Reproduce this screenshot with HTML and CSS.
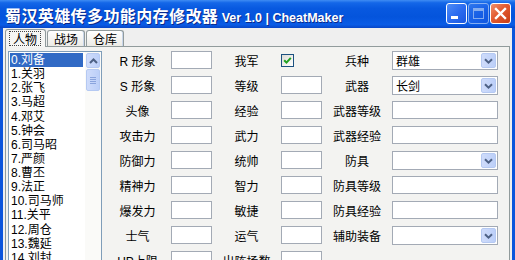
FILE: index.html
```html
<!DOCTYPE html>
<html lang="zh">
<head>
<meta charset="utf-8">
<title>蜀汉英雄传多功能内存修改器</title>
<link rel="stylesheet" href="styles.css">
</head>
<body>
<div class="window">
  <div class="titlebar">
    <div class="title"><span class="t-cn">蜀汉英雄传多功能内存修改器</span><span class="t-en">&nbsp;Ver 1.0 | CheatMaker</span></div>
    <div class="wbtns">
      <div class="wbtn"><svg width="21" height="21" viewBox="0 0 21 21"><rect x="5" y="13" width="7" height="3" fill="#fff"/></svg></div>
      <div class="wbtn dim"><svg width="21" height="21" viewBox="0 0 21 21"><rect x="5.5" y="5.5" width="10" height="10" fill="none" stroke="#fff" stroke-width="1"/><rect x="5" y="5" width="11" height="3" fill="#fff"/></svg></div>
      <div class="wbtn close"><svg width="21" height="21" viewBox="0 0 21 21"><path d="M6 6 L15 15 M15 6 L6 15" stroke="#fff" stroke-width="2.4" stroke-linecap="square"/></svg></div>
    </div>
  </div>
  <div class="client">
    <div class="tabs">
      <div class="tab active"><span class="focus">人物</span></div>
      <div class="tab">战场</div>
      <div class="tab">仓库</div>
    </div>
    <div class="page">
      <div class="listbox">
        <ul class="items">
          <li class="sel">0.刘备</li>
          <li>1.关羽</li>
          <li>2.张飞</li>
          <li>3.马超</li>
          <li>4.邓艾</li>
          <li>5.钟会</li>
          <li>6.司马昭</li>
          <li>7.严颜</li>
          <li>8.曹丕</li>
          <li>9.法正</li>
          <li>10.司马师</li>
          <li>11.关平</li>
          <li>12.周仓</li>
          <li>13.魏延</li>
          <li>14.刘封</li>
        </ul>
        <div class="vscroll">
          <div class="sbtn"><svg width="9" height="6" viewBox="0 0 9 6"><path d="M1 5 L4.5 1.5 L8 5" fill="none" stroke="#4d6185" stroke-width="2"/></svg></div>
          <div class="thumb"><i></i><i></i><i></i><i></i></div>
        </div>
      </div>
      <div class="form">
        <div class="lbl">R 形象</div><div class="edit"></div><div class="lbl">我军</div><div class="chkcell"><div class="chk"><svg width="9" height="9" viewBox="0 0 9 9"><path d="M1.2 4.2 L3.5 6.6 L7.8 1.8" fill="none" stroke="#21a121" stroke-width="2"/></svg></div></div><div class="lbl">兵种</div><div class="combo"><span>群雄</span><div class="dd"><svg width="9" height="6" viewBox="0 0 9 6"><path d="M1 1.2 L4.5 4.6 L8 1.2" fill="none" stroke="#4d6185" stroke-width="2"/></svg></div></div>
        <div class="lbl">S 形象</div><div class="edit"></div><div class="lbl">等级</div><div class="edit"></div><div class="lbl">武器</div><div class="combo"><span>长剑</span><div class="dd"><svg width="9" height="6" viewBox="0 0 9 6"><path d="M1 1.2 L4.5 4.6 L8 1.2" fill="none" stroke="#4d6185" stroke-width="2"/></svg></div></div>
        <div class="lbl">头像</div><div class="edit"></div><div class="lbl">经验</div><div class="edit"></div><div class="lbl">武器等级</div><div class="edit"></div>
        <div class="lbl">攻击力</div><div class="edit"></div><div class="lbl">武力</div><div class="edit"></div><div class="lbl">武器经验</div><div class="edit"></div>
        <div class="lbl">防御力</div><div class="edit"></div><div class="lbl">统帅</div><div class="edit"></div><div class="lbl">防具</div><div class="combo"><span></span><div class="dd"><svg width="9" height="6" viewBox="0 0 9 6"><path d="M1 1.2 L4.5 4.6 L8 1.2" fill="none" stroke="#4d6185" stroke-width="2"/></svg></div></div>
        <div class="lbl">精神力</div><div class="edit"></div><div class="lbl">智力</div><div class="edit"></div><div class="lbl">防具等级</div><div class="edit"></div>
        <div class="lbl">爆发力</div><div class="edit"></div><div class="lbl">敏捷</div><div class="edit"></div><div class="lbl">防具经验</div><div class="edit"></div>
        <div class="lbl">士气</div><div class="edit"></div><div class="lbl">运气</div><div class="edit"></div><div class="lbl">辅助装备</div><div class="combo"><span></span><div class="dd"><svg width="9" height="6" viewBox="0 0 9 6"><path d="M1 1.2 L4.5 4.6 L8 1.2" fill="none" stroke="#4d6185" stroke-width="2"/></svg></div></div>
        <div class="lbl">HP上限</div><div class="edit"></div><div class="lbl">出阵场数</div><div class="edit"></div><div></div><div></div>
      </div>
    </div>
  </div>
</div>
</body>
</html>
```
FILE: styles.css
```css
html, body {
  margin: 0;
  padding: 0;
}
body {
  width: 515px;
  height: 260px;
  overflow: hidden;
  font-family: "Liberation Sans", "Noto Sans CJK SC", sans-serif;
  font-size: 12px;
  color: #000;
}
.window {
  width: 515px;
  height: 300px;
  display: flex;
  flex-direction: column;
  background: #0b55dc;
}
.titlebar {
  height: 28px;
  flex: none;
  display: flex;
  align-items: center;
  justify-content: space-between;
  padding: 1px 4px 0 5px;
  box-sizing: border-box;
  background: linear-gradient(#3f8cf3 0%, #1467e8 10%, #0859e0 30%, #0454dc 60%, #0a5ce6 88%, #0846c6 100%);
  color: #fff;
}
.title {
  display: flex;
  align-items: baseline;
  white-space: nowrap;
  text-shadow: 1px 1px 0 #0b2a8c;
}
.t-cn {
  font-family: "Noto Sans CJK SC", sans-serif;
  font-weight: bold;
  font-size: 16px;
  letter-spacing: 0.4px;
}
.t-en {
  font-family: "Liberation Sans", sans-serif;
  font-weight: bold;
  font-size: 12.5px;
}
.wbtns {
  display: flex;
  gap: 1px;
  margin-top: -2px;
}
.wbtn {
  width: 21px;
  height: 21px;
  box-sizing: border-box;
  border: 1px solid #fff;
  border-radius: 3px;
  background: linear-gradient(135deg, #4f8df6 0%, #2c6cf0 50%, #1a57e0 100%);
  display: flex;
}
.wbtn svg {
  margin: -1px;
}
.wbtn.dim {
  opacity: 0.5;
}
.wbtn.close {
  background: linear-gradient(135deg, #f0906c 0%, #e25a30 45%, #c83d15 100%);
}
.client {
  flex: 1;
  margin: 0 3px;
  background: #efefef;
  display: flex;
  flex-direction: column;
}
.tabs {
  height: 18px;
  flex: none;
  display: flex;
  align-items: flex-end;
  padding-left: 2px;
  gap: 1px;
}
.tab {
  height: 15px;
  padding: 0 6px;
  border: 1px solid #919b9c;
  border-bottom: none;
  border-radius: 3px 3px 0 0;
  background: linear-gradient(#ffffff, #ecebe6);
  font-family: "Noto Sans CJK SC", sans-serif;
  font-size: 12px;
  line-height: 15px;
  box-shadow: inset -1px 0 0 #c9d6ea;
}
.tab.active {
  height: 18px;
  padding: 0 4px;
  line-height: 17px;
  background: #f6f6f4;
  position: relative;
  z-index: 1;
  margin-bottom: -1px;
  box-shadow: none;
  box-sizing: border-box;
  width: 41px;
}
.focus {
  display: inline-block;
  padding: 0 3px;
  line-height: 13px;
  outline: 1px dotted #444;
  outline-offset: 0;
}
.page {
  flex: 1;
  margin: 0 2px;
  border: 1px solid #919b9c;
  background: #f3f3f1;
  display: flex;
  align-items: flex-start;
  padding: 4px 0 0 2px;
}
.listbox {
  width: 94px;
  height: 230px;
  box-sizing: border-box;
  border: 1px solid #7f9db9;
  background: #fff;
  display: flex;
  flex: none;
}
.items {
  list-style: none;
  margin: 0;
  padding: 1px 1px 0 1px;
  flex: 1;
  font-family: "Liberation Sans", "Noto Sans CJK SC", sans-serif;
  font-size: 12px;
}
.items li {
  height: 14.14px;
  line-height: 14px;
  padding-left: 1px;
  white-space: nowrap;
}
.items li.sel {
  background: #316ac5;
  color: #fff;
  width: 72px;
}
.vscroll {
  width: 16px;
  background: #fafaf8;
  padding: 1px 1px 0 1px;
  box-sizing: border-box;
  display: flex;
  flex-direction: column;
  gap: 1px;
}
.sbtn, .thumb, .dd {
  border: 1px solid #b5c9f2;
  border-radius: 2px;
  background: linear-gradient(90deg, #cfdcfb, #bccff8);
  box-sizing: border-box;
  display: flex;
  align-items: center;
  justify-content: center;
}
.sbtn {
  height: 15px;
}
.thumb {
  height: 22px;
  flex-direction: column;
  gap: 1px;
}
.thumb i {
  display: block;
  width: 6px;
  height: 1px;
  background: #8aa4dd;
}
.form {
  margin-left: 2px;
  display: grid;
  grid-template-columns: 67px 41px 69px 41px 70px 106px;
  grid-auto-rows: 18px;
  row-gap: 7px;
  font-family: "Liberation Sans", "Noto Sans CJK SC", sans-serif;
  font-size: 12px;
}
.lbl {
  display: flex;
  align-items: center;
  justify-content: center;
  white-space: nowrap;
  padding-top: 1px;
}
.edit {
  border: 1px solid #a3aab5;
  background: #fff;
  box-sizing: border-box;
}
.chkcell {
  display: flex;
  align-items: center;
}
.chk {
  width: 13px;
  height: 13px;
  box-sizing: border-box;
  border: 1px solid #1c5180;
  background: linear-gradient(135deg, #dcdcd6, #fff);
  display: flex;
  align-items: center;
  justify-content: center;
}
.combo {
  border: 1px solid #a3aab5;
  background: #fff;
  box-sizing: border-box;
  display: flex;
  align-items: center;
  justify-content: space-between;
  padding: 1px 1px 1px 3px;
  height: 19px;
}
.combo span {
  font-family: "Noto Sans CJK SC", sans-serif;
  font-size: 12px;
}
.dd {
  width: 15px;
  height: 15px;
}
```
